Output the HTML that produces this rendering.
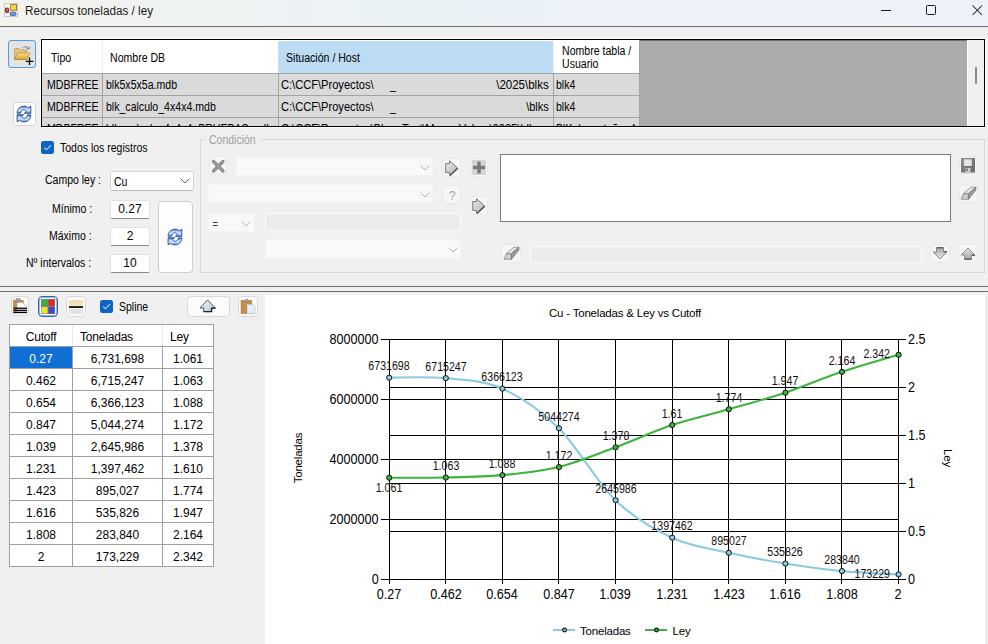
<!DOCTYPE html>
<html><head><meta charset="utf-8">
<style>
*{box-sizing:border-box;margin:0;padding:0}
html,body{width:988px;height:644px;overflow:hidden;background:#f0f0f0;font-family:"Liberation Sans",sans-serif;font-size:12px;color:#000}

.a{position:absolute}
#title{left:0;top:0;width:988px;height:27px;background:linear-gradient(90deg,#f4f3ec 0%,#eef2f2 18%,#ebf2f6 40%,#ecf2f8 70%,#eef2fa 100%);border-bottom:1px solid #6b6b6b}
#title .t{left:24.5px;top:4px;font-size:12.5px;color:#1a1a1a;transform:scaleX(.935);transform-origin:0 0;white-space:nowrap}
.th{font-size:12px;color:#000;white-space:nowrap}
.td{font-size:12px;color:#111;white-space:nowrap}
.lb{font-size:12px;line-height:14px;white-space:nowrap;transform:scaleX(.875);transform-origin:0 0}
.chk{width:13px;height:13px;background:#0f63c2;border-radius:2.5px}
.chk svg{display:block}
.combo{background:#fff;border:1px solid #d4d4d4;border-bottom-color:#b8b8b8;border-radius:2px}
.tb{width:40px;height:19px;background:#fff;border:1px solid #e2e2e2;border-bottom:1px solid #8a8a8a;text-align:center;font-size:12px;line-height:17px;border-radius:2px}
.btn{background:#fdfdfd;border:1px solid #d0d0d0;border-radius:4px}
.dbtn{background:#f6f6f6;border:1px solid #e8e8e8;border-radius:3px}
.dcombo{background:#f9f9f9;border:1px solid #f4f4f4;border-radius:2px}
.tbtn{background:#fbfbfb;border:1px solid #d8d8d8;border-radius:4px}
.gh{font-size:12px;letter-spacing:-0.2px;white-space:nowrap}
.gc{font-size:12px;white-space:nowrap}
.axl{font-size:14px;white-space:nowrap;line-height:16px;transform:scaleX(.9);color:#000}
.axc{width:60px;text-align:center}
.dl{font-size:12.5px;white-space:nowrap;line-height:14px;transform:scaleX(.85);color:#111}
.ct{font-size:11.5px;letter-spacing:-0.2px;white-space:nowrap}
.at{font-size:11.5px;letter-spacing:-0.2px;white-space:nowrap}
.lg{font-size:11.5px;letter-spacing:-0.2px;white-space:nowrap}
.sx{font-size:12px;line-height:14px;white-space:nowrap;transform:scaleX(.88);transform-origin:0 0;color:#000}
.grid{border-collapse:collapse}
</style></head><body>
<div id="title" class="a">
  <svg class="a" style="left:4px;top:3px" width="14" height="14" viewBox="0 0 14 14">
    <rect x="0.4" y="0.4" width="13.2" height="13.2" fill="#f6f6f6" stroke="#bdbdbd" stroke-width="0.8"/>
    <rect x="6.6" y="1.6" width="5.9" height="5.7" fill="#f7d24a" stroke="#9a7a20" stroke-width="0.9"/>
    <rect x="1.5" y="5.2" width="3.1" height="4.2" rx="0.5" fill="#d85a4a" stroke="#701810" stroke-width="0.9"/>
    <rect x="6.2" y="9.2" width="5.7" height="3.4" rx="1" fill="#6a9ae0" stroke="#2a50a0" stroke-width="0.8"/>
  </svg>
  <div class="a t">Recursos toneladas / ley</div>
  <div class="a" style="left:881px;top:10px;width:10px;height:1px;background:#1a1a1a"></div>
  <div class="a" style="left:926px;top:5px;width:10px;height:10px;border:1px solid #1a1a1a;border-radius:1.5px"></div>
  <svg class="a" style="left:971px;top:4px" width="12" height="12" viewBox="0 0 12 12"><path d="M1.5 1.5L11 11M11 1.5L1.5 11" stroke="#1a1a1a" stroke-width="1.05"/></svg>
</div>

<!-- left buttons -->
<div class="a" style="left:8px;top:40px;width:28px;height:28px;border:1px solid #4a9fe0;border-radius:3px;background:#e3e3e3"></div>
<svg class="a" style="left:13px;top:45px" width="21" height="21" viewBox="0 0 21 21">
  <defs><linearGradient id="fg" x1="0" y1="0" x2="0" y2="1"><stop offset="0" stop-color="#fbe08a"/><stop offset="1" stop-color="#dca03a"/></linearGradient></defs>
  <path d="M1.5 3.5h4.5l1.5 1.5h6v9.5h-12z" fill="#e6c779" stroke="#a88540" stroke-width="0.6"/>
  <path d="M1.5 14.5l3-6.5h12.5l-3 6.5z" fill="url(#fg)" stroke="#a07a30" stroke-width="0.6"/>
  <path d="M10 3.2c1.5-2 4.5-2 5.5 0.3" fill="none" stroke="#5a7aa8" stroke-width="1"/>
  <path d="M16.8 1.8l-1 2.3l-2.2-.7" fill="none" stroke="#5a7aa8" stroke-width="1"/>
  <path d="M16.5 12.5v7.5M12.8 16.3h7.5" stroke="#000" stroke-width="1.25"/>
</svg>
<div class="a" style="left:13px;top:102px;width:23px;height:24px;border:1px solid #d6d6d6;border-radius:3px;background:#fdfdfd"></div>
<svg class="a" style="left:14px;top:103px" width="20" height="22" viewBox="0 0 20 22"><defs><linearGradient id="rg" x1="0" y1="0" x2="0" y2="1"><stop offset="0" stop-color="#3a68c0"/><stop offset=".35" stop-color="#b8d6f6"/><stop offset=".65" stop-color="#c8e2fa"/><stop offset="1" stop-color="#4a7ad0"/></linearGradient></defs>
  <path d="M3.1 10.2C3.1 6 6.2 3.2 10 3.2C11.8 3.2 13.2 3.8 14.3 4.8L16.8 3.3L16.8 10.3L10.3 10.3L12.3 8.5C11.6 7.6 10.8 6.8 9.8 6.8C8 6.8 6.6 8.3 6.5 10.2Z" fill="url(#rg)" stroke="#22459a" stroke-width="0.9"/>
  <path d="M16.8 11.9C16.8 16.1 13.7 18.9 9.9 18.9C8.1 18.9 6.7 18.3 5.6 17.3L3.1 18.8L3.1 11.8L9.6 11.8L7.6 13.6C8.3 14.5 9.1 15.3 10.1 15.3C11.9 15.3 13.3 13.8 13.4 11.9Z" fill="url(#rg)" stroke="#22459a" stroke-width="0.9"/></svg>

<!-- top grid -->
<div class="a" style="left:40px;top:38px;width:946px;height:90px;border:1px solid #fff"></div>
<div class="a" style="left:41px;top:39px;width:944px;height:88px;border:1px solid #000;background:#ababab;box-shadow:inset 1px 1px 0 rgba(0,0,0,.35)"></div>
<div class="a" style="left:42px;top:40px;width:598px;height:33px;background:#fff"></div>
<div class="a" style="left:278px;top:41px;width:275px;height:32px;background:#bcdcf4"></div>
<div class="a" style="left:102px;top:40px;width:1px;height:33px;background:#ececec"></div>
<div class="a" style="left:553px;top:40px;width:1px;height:33px;background:#f4f4f4"></div>
<div class="a" style="left:42px;top:73px;width:598px;height:53px;background:#dadada"></div>
<div class="a" style="left:42px;top:73px;width:598px;height:1px;background:#a3a3a3"></div>
<div class="a" style="left:42px;top:95px;width:598px;height:1px;background:#a3a3a3"></div>
<div class="a" style="left:42px;top:117px;width:598px;height:1px;background:#a3a3a3"></div>
<div class="a" style="left:102px;top:74px;width:1px;height:52px;background:#a3a3a3"></div>
<div class="a" style="left:278px;top:74px;width:1px;height:52px;background:#a3a3a3"></div>
<div class="a" style="left:553px;top:74px;width:1px;height:52px;background:#a3a3a3"></div>
<div class="a" style="left:639px;top:40px;width:1px;height:86px;background:#a3a3a3"></div>
<div class="a" style="left:967px;top:40px;width:17px;height:86px;background:#f0f0f0;border-left:1px solid #fff"></div>
<div class="a" style="left:975px;top:67px;width:2px;height:17px;background:#8a8a8a;border-radius:1px"></div>
<div class="a sx" style="left:51px;top:51px">Tipo</div>
<div class="a sx" style="left:110px;top:51px">Nombre DB</div>
<div class="a sx" style="left:286px;top:51px">Situación / Host</div>
<div class="a sx" style="left:561.8px;top:44.2px">Nombre tabla /</div>
<div class="a sx" style="left:561.8px;top:56.6px">Usuario</div>
<div style="position:absolute;left:42px;top:74px;width:925px;height:52px;overflow:hidden">
<div class="a sx" style="left:4.5px;top:4.3px">MDBFREE</div>
<div class="a sx" style="left:63.5px;top:4.3px">blk5x5x5a.mdb</div>
<div class="a sx" style="left:239px;top:4.3px;transform:scaleX(.925)">C:\CCF\Proyectos\</div>
<div class="a sx" style="left:347.6px;top:4.3px">_</div>
<div class="a sx" style="right:418.7px;top:4.3px;transform:scaleX(.96);transform-origin:100% 0">\2025\blks</div>
<div class="a sx" style="left:514.3px;top:4.3px">blk4</div>
<div class="a sx" style="left:4.5px;top:26.3px">MDBFREE</div>
<div class="a sx" style="left:63.5px;top:26.3px">blk_calculo_4x4x4.mdb</div>
<div class="a sx" style="left:239px;top:26.3px;transform:scaleX(.925)">C:\CCF\Proyectos\</div>
<div class="a sx" style="left:347.6px;top:26.3px">_</div>
<div class="a sx" style="right:418.7px;top:26.3px;transform:scaleX(.91);transform-origin:100% 0">\blks</div>
<div class="a sx" style="left:514.3px;top:26.3px">blk4</div>
<div class="a sx" style="left:4.5px;top:48.3px">MDBFREE</div>
<div class="a" style="left:60px;top:0;width:175px;height:52px;overflow:hidden"><div class="a sx" style="left:3.5px;top:48.3px">blk_calculo_4x4x4_PRUEBAS.mdb</div></div>
<div class="a" style="left:236px;top:0;width:275px;height:52px;overflow:hidden"><div class="a sx" style="left:3px;top:48.3px;transform:scaleX(.925)">C:\CCF\Proyectos\Blue_Test\Mayo_Volum\2025\blks</div></div>
<div class="a sx" style="left:514.3px;top:48.3px">BlKal_cont_ñ_a4</div>
</div>
<!-- mid left -->
<div class="a chk" style="left:41px;top:141px"><svg width="13" height="13" viewBox="0 0 13 13"><path d="M3.2 6.6l2.2 2.2l4.6-4.6" fill="none" stroke="#b8dcff" stroke-width="1.1"/></svg></div>
<div class="a lb" style="left:59.8px;top:141px">Todos los registros</div>
<div class="a lb" style="left:44.5px;top:173.4px">Campo ley :</div>
<div class="a combo" style="left:110px;top:171px;width:84px;height:20px"><span class="a lb" style="left:3px;top:2.5px">Cu</span>
 <svg class="a" style="left:69px;top:6px" width="10" height="6" viewBox="0 0 10 6"><path d="M0.5 0.5l4.5 4.5l4.5-4.5" fill="none" stroke="#555" stroke-width="0.9"/></svg></div>
<div class="a lb" style="left:52px;top:201.8px">Mínimo :</div>
<div class="a lb" style="left:49px;top:228.6px">Máximo :</div>
<div class="a lb" style="left:26px;top:255.8px">Nº intervalos :</div>
<div class="a tb" style="left:110px;top:200px">0.27</div>
<div class="a tb" style="left:110px;top:227px">2</div>
<div class="a tb" style="left:110px;top:254px">10</div>
<div class="a btn" style="left:158px;top:201px;width:35px;height:72px"></div>
<svg class="a" style="left:165px;top:226px" width="20" height="22" viewBox="0 0 20 22"><defs><linearGradient id="rg2" x1="0" y1="0" x2="0" y2="1"><stop offset="0" stop-color="#3a68c0"/><stop offset=".35" stop-color="#b8d6f6"/><stop offset=".65" stop-color="#c8e2fa"/><stop offset="1" stop-color="#4a7ad0"/></linearGradient></defs>
  <path d="M3.1 10.2C3.1 6 6.2 3.2 10 3.2C11.8 3.2 13.2 3.8 14.3 4.8L16.8 3.3L16.8 10.3L10.3 10.3L12.3 8.5C11.6 7.6 10.8 6.8 9.8 6.8C8 6.8 6.6 8.3 6.5 10.2Z" fill="url(#rg2)" stroke="#22459a" stroke-width="0.9"/>
  <path d="M16.8 11.9C16.8 16.1 13.7 18.9 9.9 18.9C8.1 18.9 6.7 18.3 5.6 17.3L3.1 18.8L3.1 11.8L9.6 11.8L7.6 13.6C8.3 14.5 9.1 15.3 10.1 15.3C11.9 15.3 13.3 13.8 13.4 11.9Z" fill="url(#rg2)" stroke="#22459a" stroke-width="0.9"/></svg>

<!-- groupbox -->
<div class="a" style="left:200px;top:139px;width:785px;height:134px;border:1px solid #d9d9d9"></div>
<div class="a" style="left:205px;top:132px;width:56px;height:14px;background:#f0f0f0"></div><div class="a lb" style="left:208.6px;top:132.7px;color:#a0a0a0">Condición</div>
<div class="a dbtn" style="left:209px;top:156px;width:18px;height:19px"></div>
<svg class="a" style="left:211px;top:159px" width="15" height="15" viewBox="0 0 15 15"><path d="M2.5 2.5L12 12M12 2.5L2.5 12" stroke="#8a8a8a" stroke-width="3.3" stroke-linecap="round"/><path d="M2.5 2.5L12 12M12 2.5L2.5 12" stroke="#a8a8a8" stroke-width="1" stroke-linecap="round"/></svg>
<div class="a dcombo" style="left:236px;top:157px;width:197px;height:19px"><svg class="a" style="left:183px;top:7px" width="10" height="6" viewBox="0 0 10 6"><path d="M0.5 0.5l4.5 4.5l4.5-4.5" fill="none" stroke="#b5b5b5" stroke-width="1"/></svg></div>
<div class="a dbtn" style="left:443px;top:158px;width:18px;height:19px"></div>
<svg class="a" style="left:445px;top:160px" width="15" height="16" viewBox="0 0 15 16"><defs><linearGradient id="ag1" x1="0" y1="0" x2="1" y2="1"><stop offset="0" stop-color="#e8e8e8"/><stop offset="1" stop-color="#b4b4b4"/></linearGradient></defs><path d="M0.7 3.5H4.5V0.7L12.5 8L4.5 15.3V12.5H0.7Z" fill="url(#ag1)" stroke="#707070" stroke-width="0.9"/><path d="M12.8 8.3L5 15.5" stroke="#4a4a4a" stroke-width="1.2"/></svg>
<div class="a dbtn" style="left:470px;top:158px;width:18px;height:19px"></div>
<svg class="a" style="left:472px;top:160px" width="14" height="15" viewBox="0 0 14 15"><rect x="0" y="0" width="14" height="15" fill="#d4d4d4"/><path d="M5.3 1.5h3.4v4.3h4.3v3.4h-4.3v4.3h-3.4v-4.3h-4.3v-3.4h4.3z" fill="#7a7a7a"/></svg>
<div class="a dcombo" style="left:208px;top:184px;width:225px;height:19px"><svg class="a" style="left:211px;top:7px" width="10" height="6" viewBox="0 0 10 6"><path d="M0.5 0.5l4.5 4.5l4.5-4.5" fill="none" stroke="#b5b5b5" stroke-width="1"/></svg></div>
<div class="a dbtn" style="left:442px;top:185px;width:19px;height:19px"><span class="a" style="left:6px;top:2.5px;color:#a8a8a8;font-size:12px">?</span></div>
<div class="a dbtn" style="left:470px;top:196px;width:18px;height:19px"></div>
<svg class="a" style="left:472px;top:198px" width="15" height="16" viewBox="0 0 15 16"><defs><linearGradient id="ag2" x1="0" y1="0" x2="1" y2="1"><stop offset="0" stop-color="#e8e8e8"/><stop offset="1" stop-color="#b4b4b4"/></linearGradient></defs><path d="M0.7 3.5H4.5V0.7L12.5 8L4.5 15.3V12.5H0.7Z" fill="url(#ag2)" stroke="#707070" stroke-width="0.9"/><path d="M12.8 8.3L5 15.5" stroke="#4a4a4a" stroke-width="1.2"/></svg>
<div class="a dcombo" style="left:208px;top:213px;width:47px;height:19px"><span class="a" style="left:3px;top:3.5px;color:#333;font-size:11px;line-height:12px;transform:scaleX(.85)">=</span><svg class="a" style="left:32px;top:7px" width="10" height="6" viewBox="0 0 10 6"><path d="M0.5 0.5l4.5 4.5l4.5-4.5" fill="none" stroke="#b5b5b5" stroke-width="1"/></svg></div>
<div class="a" style="left:265px;top:213px;width:196px;height:18px;border:1px solid #fafafa;background:#ececec"></div>
<div class="a dcombo" style="left:265px;top:239px;width:196px;height:20px"><svg class="a" style="left:182px;top:7px" width="10" height="6" viewBox="0 0 10 6"><path d="M0.5 0.5l4.5 4.5l4.5-4.5" fill="none" stroke="#b5b5b5" stroke-width="1"/></svg></div>
<div class="a" style="left:500px;top:154px;width:451px;height:68px;border:1px solid #7a7a7a;background:#fff"></div>
<div class="a dbtn" style="left:959px;top:156px;width:19px;height:18px"></div>
<svg class="a" style="left:961px;top:158px" width="15" height="15" viewBox="0 0 15 15"><defs><linearGradient id="sg" x1="0" y1="0" x2="1" y2="1"><stop offset="0" stop-color="#8a8a8a"/><stop offset="1" stop-color="#6a6a6a"/></linearGradient></defs><rect x="0" y="0" width="14" height="14.5" fill="url(#sg)"/><rect x="2.8" y="1.3" width="8" height="6.7" fill="#e4e4e4"/><rect x="4.5" y="10" width="5" height="4" fill="#d0d0d0"/><rect x="5.2" y="10.6" width="1.6" height="2.4" fill="#6a6a6a"/></svg>
<div class="a dbtn" style="left:959px;top:185px;width:19px;height:18px"></div>
<svg class="a" style="left:960px;top:186px" width="17" height="15" viewBox="0 0 17 15"><path d="M3.3 7.8L10.7 1.2H15.9L8.4 7.8Z" fill="#e6e6e6" stroke="#7a7a7a" stroke-width="0.7"/><path d="M1.2 13.3L3.3 7.8H8.4V13.3Z" fill="#cfcfcf" stroke="#7a7a7a" stroke-width="0.7"/><path d="M8.4 7.8L15.9 1.2V4L8.4 13.3Z" fill="#9e9e9e" stroke="#6a6a6a" stroke-width="0.7"/></svg>
<div class="a dbtn" style="left:501px;top:244px;width:20px;height:19px"></div>
<svg class="a" style="left:503px;top:246px" width="17" height="15" viewBox="0 0 17 15"><path d="M3.3 7.8L10.7 1.2H15.9L8.4 7.8Z" fill="#e6e6e6" stroke="#7a7a7a" stroke-width="0.7"/><path d="M1.2 13.3L3.3 7.8H8.4V13.3Z" fill="#cfcfcf" stroke="#7a7a7a" stroke-width="0.7"/><path d="M8.4 7.8L15.9 1.2V4L8.4 13.3Z" fill="#9e9e9e" stroke="#6a6a6a" stroke-width="0.7"/></svg>
<div class="a" style="left:530px;top:246px;width:392px;height:17px;border:1px solid #fafafa;background:#ececec"></div>
<div class="a dbtn" style="left:930px;top:244px;width:20px;height:19px"></div>
<svg class="a" style="left:932px;top:247px" width="16" height="14" viewBox="0 0 16 14"><defs><linearGradient id="dg1" x1="0" y1="0" x2="0" y2="1"><stop offset="0" stop-color="#e6e6e6"/><stop offset="1" stop-color="#a8a8a8"/></linearGradient></defs><g transform="matrix(1 0 0 -1 0 13)"><path d="M1 8L8 1L15 8H11.5V12H4.5V8Z" fill="url(#dg1)" stroke="#7a7a7a" stroke-width="0.8"/><path d="M4.5 12.3H11.5M11.8 8.3H15" stroke="#4a4a4a" stroke-width="1"/></g></svg>
<div class="a dbtn" style="left:958px;top:244px;width:20px;height:19px"></div>
<svg class="a" style="left:960px;top:247px" width="16" height="14" viewBox="0 0 16 14"><defs><linearGradient id="ug1" x1="0" y1="0" x2="0" y2="1"><stop offset="0" stop-color="#e6e6e6"/><stop offset="1" stop-color="#a8a8a8"/></linearGradient></defs><g><path d="M1 8L8 1L15 8H11.5V12H4.5V8Z" fill="url(#ug1)" stroke="#7a7a7a" stroke-width="0.8"/><path d="M4.5 12.3H11.5M11.8 8.3H15" stroke="#4a4a4a" stroke-width="1"/></g></svg>

<!-- separator -->
<div class="a" style="left:0;top:286px;width:988px;height:1px;background:#6d6d6d"></div>
<div class="a" style="left:0;top:291px;width:988px;height:1px;background:#6d6d6d"></div>
<!-- bottom toolbar -->
<div class="a tbtn" style="left:11px;top:296px;width:18px;height:20px"></div>
<svg class="a" style="left:11px;top:296px" width="18" height="20" viewBox="0 0 18 20">
  <rect x="2" y="4" width="10.7" height="13.2" fill="#c8904a"/>
  <rect x="5" y="2.5" width="4" height="2.5" fill="#9aa8c0" stroke="#667" stroke-width="0.4"/>
  <path d="M6 6.5H11.5L15.5 10.5V16H6Z" fill="#fdfdfd" stroke="#8fa0b0" stroke-width="0.5"/>
  <rect x="2.5" y="11.6" width="13.5" height="1.3" fill="#000"/>
  <rect x="2.5" y="13.7" width="13.5" height="1.3" fill="#000"/>
  <rect x="2.5" y="15.8" width="13.5" height="1.3" fill="#000"/>
</svg>
<div class="a tbtn" style="left:38px;top:296px;width:20px;height:21px;border:1px solid #2c6ab4;box-shadow:inset 0 0 0 1px rgba(44,106,180,.45);border-radius:4px"></div>
<svg class="a" style="left:41px;top:299px" width="14" height="15" viewBox="0 0 14 15">
  <rect x="0" y="0" width="14" height="15" fill="#808080"/>
  <rect x="0.5" y="0.5" width="6" height="6.5" fill="#3cb043"/>
  <rect x="7.5" y="0.5" width="6" height="6.5" fill="#e82525"/>
  <rect x="0.5" y="8" width="6" height="6.5" fill="#f2e62a"/>
  <rect x="7.5" y="8" width="6" height="6.5" fill="#4545cc"/>
</svg>
<div class="a tbtn" style="left:66px;top:296px;width:20px;height:21px"></div>
<svg class="a" style="left:69px;top:300px" width="14" height="14" viewBox="0 0 14 14">
  <rect x="0" y="0" width="14" height="5.6" fill="#ede2b2"/>
  <rect x="0" y="6.2" width="14" height="1.7" fill="#000"/>
  <rect x="0" y="8.7" width="14" height="5.3" fill="#e3e3e3"/>
</svg>
<div class="a chk" style="left:100px;top:300px"><svg width="13" height="13" viewBox="0 0 13 13"><path d="M3.2 6.6l2.2 2.2l4.6-4.6" fill="none" stroke="#b8dcff" stroke-width="1.1"/></svg></div>
<div class="a lb" style="left:119px;top:299.8px">Spline</div>
<div class="a tbtn" style="left:187px;top:296px;width:43px;height:21px"></div>
<svg class="a" style="left:199px;top:299px" width="18" height="14" viewBox="0 0 18 14">
  <defs><linearGradient id="upg" x1="0" y1="0" x2="1" y2="1"><stop offset="0" stop-color="#f4f8fb"/><stop offset="1" stop-color="#b4c6d4"/></linearGradient></defs>
  <path d="M1 9L8.5 1L16.3 9H12.4V12.5H4.7V9Z" fill="url(#upg)" stroke="#333" stroke-width="0.8"/>
  <path d="M4.5 12.8H12.7V9.3H16.6" fill="none" stroke="#111" stroke-width="1.1"/>
</svg>
<div class="a tbtn" style="left:238px;top:296px;width:20px;height:21px"></div>
<svg class="a" style="left:239px;top:298px" width="18" height="17" viewBox="0 0 18 17">
  <rect x="2" y="2.3" width="10.9" height="13.4" fill="#c98d45" stroke="#9a6a30" stroke-width="0.4"/>
  <path d="M5.5 2.5L7.7 0.8L9.8 2.5V3.5H5.5Z" fill="#a8b4d0" stroke="#5a6a90" stroke-width="0.5"/>
  <path d="M8 6.2H13.5L15.9 8.8V15.7H8Z" fill="#e6eff8" stroke="#90a4b8" stroke-width="0.5"/>
</svg>

<!-- result grid -->
<div class="a" style="left:9px;top:324px;width:205px;height:243px;background:#fff;border:1px solid #a0a0a0"></div>
<div class="a" style="left:10px;top:347px;width:62px;height:21px;background:#0f6fd6"></div>
<div class="a" style="left:10px;top:346px;width:203px;height:1px;background:#a0a0a0"></div>
<div class="a" style="left:10px;top:368px;width:203px;height:1px;background:#a0a0a0"></div>
<div class="a" style="left:10px;top:390px;width:203px;height:1px;background:#a0a0a0"></div>
<div class="a" style="left:10px;top:412px;width:203px;height:1px;background:#a0a0a0"></div>
<div class="a" style="left:10px;top:434px;width:203px;height:1px;background:#a0a0a0"></div>
<div class="a" style="left:10px;top:456px;width:203px;height:1px;background:#a0a0a0"></div>
<div class="a" style="left:10px;top:478px;width:203px;height:1px;background:#a0a0a0"></div>
<div class="a" style="left:10px;top:500px;width:203px;height:1px;background:#a0a0a0"></div>
<div class="a" style="left:10px;top:522px;width:203px;height:1px;background:#a0a0a0"></div>
<div class="a" style="left:10px;top:544px;width:203px;height:1px;background:#a0a0a0"></div>
<div class="a" style="left:10px;top:566px;width:203px;height:1px;background:#a0a0a0"></div>
<div class="a" style="left:72px;top:325px;width:1px;height:241px;background:#a0a0a0"></div>
<div class="a" style="left:162px;top:325px;width:1px;height:241px;background:#a0a0a0"></div>
<div class="a" style="left:72px;top:325px;width:1px;height:21px;background:#e8e8e8"></div>
<div class="a" style="left:162px;top:325px;width:1px;height:21px;background:#e8e8e8"></div>
<div class="a gh" style="left:10px;top:330px;width:62px;text-align:center">Cutoff</div>
<div class="a gh" style="left:80px;top:330px">Toneladas</div>
<div class="a gh" style="left:170px;top:330px">Ley</div>
<div class="a gc" style="left:10px;top:351.6px;width:62px;text-align:center;color:#fff">0.27</div>
<div class="a gc" style="left:73px;top:351.6px;width:89px;text-align:center">6,731,698</div>
<div class="a gc" style="left:163px;top:351.6px;width:50px;text-align:center">1.061</div>
<div class="a gc" style="left:10px;top:373.6px;width:62px;text-align:center">0.462</div>
<div class="a gc" style="left:73px;top:373.6px;width:89px;text-align:center">6,715,247</div>
<div class="a gc" style="left:163px;top:373.6px;width:50px;text-align:center">1.063</div>
<div class="a gc" style="left:10px;top:395.6px;width:62px;text-align:center">0.654</div>
<div class="a gc" style="left:73px;top:395.6px;width:89px;text-align:center">6,366,123</div>
<div class="a gc" style="left:163px;top:395.6px;width:50px;text-align:center">1.088</div>
<div class="a gc" style="left:10px;top:417.6px;width:62px;text-align:center">0.847</div>
<div class="a gc" style="left:73px;top:417.6px;width:89px;text-align:center">5,044,274</div>
<div class="a gc" style="left:163px;top:417.6px;width:50px;text-align:center">1.172</div>
<div class="a gc" style="left:10px;top:439.6px;width:62px;text-align:center">1.039</div>
<div class="a gc" style="left:73px;top:439.6px;width:89px;text-align:center">2,645,986</div>
<div class="a gc" style="left:163px;top:439.6px;width:50px;text-align:center">1.378</div>
<div class="a gc" style="left:10px;top:461.6px;width:62px;text-align:center">1.231</div>
<div class="a gc" style="left:73px;top:461.6px;width:89px;text-align:center">1,397,462</div>
<div class="a gc" style="left:163px;top:461.6px;width:50px;text-align:center">1.610</div>
<div class="a gc" style="left:10px;top:483.6px;width:62px;text-align:center">1.423</div>
<div class="a gc" style="left:73px;top:483.6px;width:89px;text-align:center">895,027</div>
<div class="a gc" style="left:163px;top:483.6px;width:50px;text-align:center">1.774</div>
<div class="a gc" style="left:10px;top:505.6px;width:62px;text-align:center">1.616</div>
<div class="a gc" style="left:73px;top:505.6px;width:89px;text-align:center">535,826</div>
<div class="a gc" style="left:163px;top:505.6px;width:50px;text-align:center">1.947</div>
<div class="a gc" style="left:10px;top:527.6px;width:62px;text-align:center">1.808</div>
<div class="a gc" style="left:73px;top:527.6px;width:89px;text-align:center">283,840</div>
<div class="a gc" style="left:163px;top:527.6px;width:50px;text-align:center">2.164</div>
<div class="a gc" style="left:10px;top:549.6px;width:62px;text-align:center">2</div>
<div class="a gc" style="left:73px;top:549.6px;width:89px;text-align:center">173,229</div>
<div class="a gc" style="left:163px;top:549.6px;width:50px;text-align:center">2.342</div>
<!-- chart extras -->
<svg class="a" style="left:0;top:0" width="988" height="644" viewBox="0 0 988 644">
<rect x="265" y="295" width="720" height="349" fill="#fff"/>
<path d="M381 339.5H898 M381 399.5H898 M381 459.5H898 M381 519.5H898 M381 579.5H898 M389 579.5H906 M389 531.5H906 M389 483.5H906 M389 435.5H906 M389 387.5H906 M389 339.5H906 M389.5 339V584 M445.5 339V584 M502.5 339V584 M558.5 339V584 M615.5 339V584 M672.5 339V584 M728.5 339V584 M785.5 339V584 M841.5 339V584 M898.5 339V584" stroke="#000" stroke-width="1" fill="none" shape-rendering="crispEdges"/>
<path d="M389.00 377.65 C398.43 377.73 426.73 376.31 445.60 378.14 C464.47 379.97 483.33 380.26 502.20 388.62 C521.07 396.97 539.93 409.67 558.80 428.27 C577.67 446.87 596.53 481.99 615.40 500.22 C634.27 518.45 653.13 528.92 672.00 537.68 C690.87 546.43 709.73 548.44 728.60 552.75 C747.47 557.06 766.33 560.47 785.20 563.53 C804.07 566.58 822.93 569.27 841.80 571.08 C860.67 572.90 888.97 573.85 898.40 574.40" stroke="#8cc9e4" stroke-width="2.1" fill="none"/>
<path d="M389.00 477.74 C398.43 477.71 426.73 477.98 445.60 477.55 C464.47 477.12 483.33 476.90 502.20 475.15 C521.07 473.41 539.93 471.73 558.80 467.09 C577.67 462.45 596.53 454.32 615.40 447.31 C634.27 440.30 653.13 431.38 672.00 425.04 C690.87 418.70 709.73 414.69 728.60 409.30 C747.47 403.90 766.33 398.93 785.20 392.69 C804.07 386.45 822.93 378.18 841.80 371.86 C860.67 365.54 888.97 357.62 898.40 354.77" stroke="#3cb53c" stroke-width="2.1" fill="none"/>
<circle cx="389.20" cy="377.65" r="2.6" fill="#8cc9e4" stroke="#111" stroke-width="1"/>
<circle cx="445.80" cy="378.14" r="2.6" fill="#8cc9e4" stroke="#111" stroke-width="1"/>
<circle cx="502.40" cy="388.62" r="2.6" fill="#8cc9e4" stroke="#111" stroke-width="1"/>
<circle cx="559.00" cy="428.27" r="2.6" fill="#8cc9e4" stroke="#111" stroke-width="1"/>
<circle cx="615.60" cy="500.22" r="2.6" fill="#8cc9e4" stroke="#111" stroke-width="1"/>
<circle cx="672.20" cy="537.68" r="2.6" fill="#8cc9e4" stroke="#111" stroke-width="1"/>
<circle cx="728.80" cy="552.75" r="2.6" fill="#8cc9e4" stroke="#111" stroke-width="1"/>
<circle cx="785.40" cy="563.53" r="2.6" fill="#8cc9e4" stroke="#111" stroke-width="1"/>
<circle cx="842.00" cy="571.08" r="2.6" fill="#8cc9e4" stroke="#111" stroke-width="1"/>
<circle cx="898.60" cy="574.40" r="2.6" fill="#8cc9e4" stroke="#111" stroke-width="1"/>
<circle cx="389.20" cy="477.74" r="2.6" fill="#3cb53c" stroke="#111" stroke-width="1"/>
<circle cx="445.80" cy="477.55" r="2.6" fill="#3cb53c" stroke="#111" stroke-width="1"/>
<circle cx="502.40" cy="475.15" r="2.6" fill="#3cb53c" stroke="#111" stroke-width="1"/>
<circle cx="559.00" cy="467.09" r="2.6" fill="#3cb53c" stroke="#111" stroke-width="1"/>
<circle cx="615.60" cy="447.31" r="2.6" fill="#3cb53c" stroke="#111" stroke-width="1"/>
<circle cx="672.20" cy="425.04" r="2.6" fill="#3cb53c" stroke="#111" stroke-width="1"/>
<circle cx="728.80" cy="409.30" r="2.6" fill="#3cb53c" stroke="#111" stroke-width="1"/>
<circle cx="785.40" cy="392.69" r="2.6" fill="#3cb53c" stroke="#111" stroke-width="1"/>
<circle cx="842.00" cy="371.86" r="2.6" fill="#3cb53c" stroke="#111" stroke-width="1"/>
<circle cx="898.60" cy="354.77" r="2.6" fill="#3cb53c" stroke="#111" stroke-width="1"/>
<path d="M553 630H575" stroke="#8cc9e4" stroke-width="2"/><circle cx="564.5" cy="630" r="1.9" fill="#8cc9e4" stroke="#111" stroke-width="1.1"/>
<path d="M645 630H667" stroke="#3cb53c" stroke-width="2"/><circle cx="656.5" cy="630" r="1.9" fill="#3cb53c" stroke="#111" stroke-width="1.1"/>
</svg>
<div class="a axl" style="right:609.5px;top:570.85px;transform-origin:100% 50%">0</div>
<div class="a axl" style="right:609.5px;top:510.85px;transform-origin:100% 50%">2000000</div>
<div class="a axl" style="right:609.5px;top:450.85px;transform-origin:100% 50%">4000000</div>
<div class="a axl" style="right:609.5px;top:390.85px;transform-origin:100% 50%">6000000</div>
<div class="a axl" style="right:609.5px;top:330.85px;transform-origin:100% 50%">8000000</div>
<div class="a axl" style="left:908px;top:570.85px;transform-origin:0 50%">0</div>
<div class="a axl" style="left:908px;top:522.85px;transform-origin:0 50%">0.5</div>
<div class="a axl" style="left:908px;top:474.85px;transform-origin:0 50%">1</div>
<div class="a axl" style="left:908px;top:426.85px;transform-origin:0 50%">1.5</div>
<div class="a axl" style="left:908px;top:378.85px;transform-origin:0 50%">2</div>
<div class="a axl" style="left:908px;top:330.85px;transform-origin:0 50%">2.5</div>
<div class="a axl" style="left:349.05px;top:586.3px;width:80px;text-align:center">0.27</div>
<div class="a axl" style="left:405.65px;top:586.3px;width:80px;text-align:center">0.462</div>
<div class="a axl" style="left:462.25px;top:586.3px;width:80px;text-align:center">0.654</div>
<div class="a axl" style="left:518.85px;top:586.3px;width:80px;text-align:center">0.847</div>
<div class="a axl" style="left:575.45px;top:586.3px;width:80px;text-align:center">1.039</div>
<div class="a axl" style="left:632.05px;top:586.3px;width:80px;text-align:center">1.231</div>
<div class="a axl" style="left:688.65px;top:586.3px;width:80px;text-align:center">1.423</div>
<div class="a axl" style="left:745.25px;top:586.3px;width:80px;text-align:center">1.616</div>
<div class="a axl" style="left:801.85px;top:586.3px;width:80px;text-align:center">1.808</div>
<div class="a axl" style="left:858.45px;top:586.3px;width:80px;text-align:center">2</div>
<div class="a dl" style="left:349.10px;top:359.35px;width:80px;text-align:center">6731698</div>
<div class="a dl" style="left:405.70px;top:359.84px;width:80px;text-align:center">6715247</div>
<div class="a dl" style="left:462.30px;top:370.32px;width:80px;text-align:center">6366123</div>
<div class="a dl" style="left:518.90px;top:409.97px;width:80px;text-align:center">5044274</div>
<div class="a dl" style="left:575.50px;top:481.92px;width:80px;text-align:center">2645986</div>
<div class="a dl" style="left:632.10px;top:519.38px;width:80px;text-align:center">1397462</div>
<div class="a dl" style="left:688.70px;top:534.45px;width:80px;text-align:center">895027</div>
<div class="a dl" style="left:745.30px;top:545.23px;width:80px;text-align:center">535826</div>
<div class="a dl" style="left:801.90px;top:552.78px;width:80px;text-align:center">283840</div>
<div class="a dl" style="left:809.80px;top:566.50px;width:80px;text-align:right;transform-origin:100% 50%">173229</div>
<div class="a dl" style="left:348.50px;top:481.00px;width:80px;text-align:center">1.061</div>
<div class="a dl" style="left:405.70px;top:459.25px;width:80px;text-align:center">1.063</div>
<div class="a dl" style="left:462.30px;top:456.85px;width:80px;text-align:center">1.088</div>
<div class="a dl" style="left:518.90px;top:448.79px;width:80px;text-align:center">1.172</div>
<div class="a dl" style="left:575.50px;top:429.01px;width:80px;text-align:center">1.378</div>
<div class="a dl" style="left:632.10px;top:406.74px;width:80px;text-align:center">1.61</div>
<div class="a dl" style="left:688.70px;top:391.00px;width:80px;text-align:center">1.774</div>
<div class="a dl" style="left:745.30px;top:374.39px;width:80px;text-align:center">1.947</div>
<div class="a dl" style="left:801.90px;top:353.56px;width:80px;text-align:center">2.164</div>
<div class="a dl" style="left:809.80px;top:347.30px;width:80px;text-align:right;transform-origin:100% 50%">2.342</div>
<div class="a ct" style="left:525px;top:306.7px;width:200px;text-align:center">Cu - Toneladas &amp; Ley vs Cutoff</div>
<div class="a at" style="left:268px;top:452px;width:60px;text-align:center;transform:rotate(-90deg)">Toneladas</div>
<div class="a at" style="left:918px;top:452px;width:60px;text-align:center;transform:rotate(90deg)">Ley</div>

<div class="a lg" style="left:580px;top:624.8px">Toneladas</div>
<div class="a lg" style="left:672.5px;top:624.8px">Ley</div>
<div class="a" style="left:985px;top:295px;width:3px;height:349px;background:#ededed"></div>
</body></html>
